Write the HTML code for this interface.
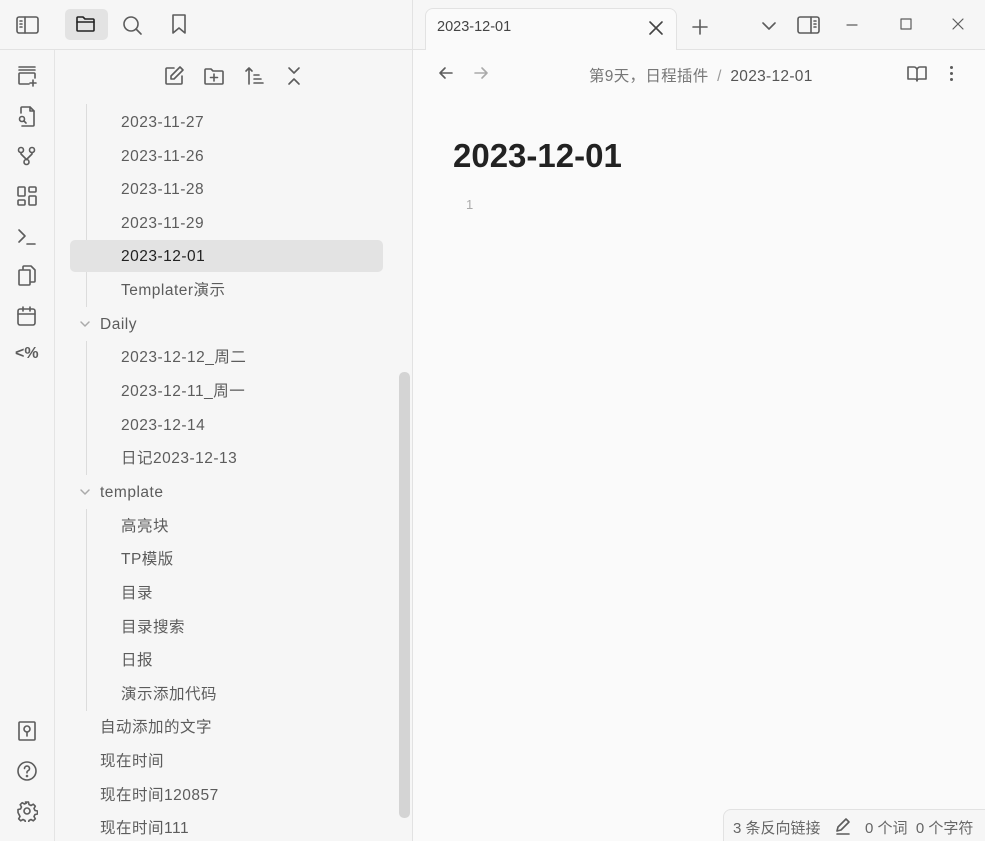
<!DOCTYPE html>
<html><head><meta charset="utf-8"><style>
*{margin:0;padding:0;box-sizing:border-box}
html,body{width:985px;height:841px;overflow:hidden}
body{background:#fafafa;font-family:"Liberation Sans","Noto Sans CJK SC",sans-serif;position:relative;color:#5c5c5c}
.abs{position:absolute}
svg{position:absolute;fill:none;stroke:#5c5c5c;stroke-width:1.6;stroke-linecap:round;stroke-linejoin:round}
.row{position:absolute;font-size:15.5px;letter-spacing:0.5px;line-height:20px;color:#5c5c5c;white-space:nowrap}
.guide{position:absolute;left:86px;width:1px;background:#dcdcdc}
</style></head><body>
<div class="abs" style="left:0;top:0;width:413px;height:841px;background:#f6f6f6"></div>
<div class="abs" style="left:413px;top:0;width:572px;height:49px;background:#f6f6f6"></div>
<div class="abs" style="left:0;top:49px;width:985px;height:1px;background:#e2e2e2"></div>
<div class="abs" style="left:54px;top:50px;width:1px;height:791px;background:#e4e4e4"></div>
<div class="abs" style="left:412px;top:0;width:1px;height:841px;background:#e2e2e2"></div>

<svg style="left:16px;top:15px" width="24" height="20" viewBox="0 0 24 20"><rect x="1" y="2" width="21" height="16" rx="2"/><line x1="9" y1="2" x2="9" y2="18"/><line x1="4" y1="6" x2="6" y2="6"/><line x1="4" y1="9" x2="6" y2="9"/><line x1="4" y1="12" x2="6" y2="12"/></svg>
<div class="abs" style="left:65px;top:9px;width:43px;height:31px;background:#e3e3e3;border-radius:5px"></div>
<svg style="left:75px;top:14px;stroke:#222" width="22" height="20" viewBox="0 0 22 20"><path d="M2 4a1 1 0 0 1 1-1h5l2 2h8a1 1 0 0 1 1 1v10a1 1 0 0 1-1 1H3a1 1 0 0 1-1-1z"/><line x1="2" y1="8" x2="19" y2="8"/></svg>
<svg style="left:121px;top:14px" width="22" height="22" viewBox="0 0 22 22"><circle cx="10" cy="10" r="7"/><line x1="15" y1="15" x2="20" y2="20"/></svg>
<svg style="left:170px;top:13px" width="18" height="22" viewBox="0 0 18 22"><path d="M3 2h12v18l-6-5-6 5z"/></svg>

<svg style="left:16px;top:65px" width="22" height="22" viewBox="0 0 22 22"><line x1="3" y1="2" x2="19" y2="2"/><line x1="3" y1="5" x2="19" y2="5"/><path d="M13 19H4a1 1 0 0 1-1-1V9a1 1 0 0 1 1-1h14a1 1 0 0 1 1 1v4"/><line x1="17" y1="15" x2="17" y2="21"/><line x1="14" y1="18" x2="20" y2="18"/></svg>
<svg style="left:16px;top:105px" width="22" height="22" viewBox="0 0 22 22"><path d="M5 8V3a1 1 0 0 1 1-1h8l4 4v14a1 1 0 0 1-1 1H6"/><path d="M14 2v4h4"/><circle cx="6" cy="14" r="2.5"/><line x1="8" y1="16" x2="10" y2="18"/></svg>
<svg style="left:16px;top:145px" width="22" height="22" viewBox="0 0 22 22"><circle cx="5" cy="5" r="2.5"/><circle cx="16" cy="5" r="2.5"/><circle cx="10.5" cy="17" r="2.5"/><path d="M5 7.5v1.5l5.5 5.5M16 7.5v1.5l-5.5 5.5"/></svg>
<svg style="left:16px;top:185px" width="22" height="22" viewBox="0 0 22 22"><rect x="2" y="2" width="7" height="9" rx="1"/><rect x="13" y="2" width="7" height="5" rx="1"/><rect x="13" y="11" width="7" height="9" rx="1"/><rect x="2" y="15" width="7" height="5" rx="1"/></svg>
<svg style="left:16px;top:225px" width="22" height="22" viewBox="0 0 22 22"><path d="M3 5l6 6-6 6"/><line x1="11" y1="19" x2="19" y2="19"/></svg>
<svg style="left:16px;top:264px" width="22" height="22" viewBox="0 0 22 22"><path d="M7 5V3a1 1 0 0 1 1-1h7l4 4v11a1 1 0 0 1-1 1h-3"/><path d="M3 7a1 1 0 0 1 1-1h10v14a1 1 0 0 1-1 1H4a1 1 0 0 1-1-1z"/></svg>
<svg style="left:16px;top:305px" width="22" height="22" viewBox="0 0 22 22"><rect x="2" y="4" width="17" height="16" rx="2"/><line x1="2" y1="9" x2="19" y2="9"/><line x1="7" y1="2" x2="7" y2="6"/><line x1="14" y1="2" x2="14" y2="6"/></svg>
<div class="abs" style="left:15px;top:345px;font-size:16px;font-weight:bold;color:#5c5c5c">&lt;%</div>
<svg style="left:16px;top:720px" width="22" height="22" viewBox="0 0 22 22"><rect x="3" y="2" width="16" height="18" rx="1"/><circle cx="11" cy="9" r="3"/><line x1="11" y1="12" x2="11" y2="16"/></svg>
<svg style="left:16px;top:760px" width="22" height="22" viewBox="0 0 22 22"><circle cx="11" cy="11" r="9"/><path d="M8.5 8.5a2.5 2.5 0 1 1 3.5 2.3c-.7.3-1 .8-1 1.5v.5"/><circle cx="11" cy="16" r=".5"/></svg>
<svg style="left:16px;top:800px" width="22" height="22" viewBox="0 0 22 22"><circle cx="11" cy="11" r="3"/><path d="M9.5 2h3l.5 2.5 2 1 2.3-1.3 2 2-1.3 2.3 1 2 2.5.5v3l-2.5.5-1 2 1.3 2.3-2 2-2.3-1.3-2 1-.5 2.5h-3l-.5-2.5-2-1-2.3 1.3-2-2 1.3-2.3-1-2L2 12.5v-3l2.5-.5 1-2-1.3-2.3 2-2 2.3 1.3 2-1z"/></svg>

<svg style="left:163px;top:65px" width="22" height="22" viewBox="0 0 22 22"><path d="M11 3H4a1 1 0 0 0-1 1v14a1 1 0 0 0 1 1h14a1 1 0 0 0 1-1v-7"/><path d="M17 2l3 3-9 9H8v-3z"/></svg>
<svg style="left:203px;top:65px" width="22" height="22" viewBox="0 0 22 22"><path d="M2 5a1 1 0 0 1 1-1h5l2 2h9a1 1 0 0 1 1 1v11a1 1 0 0 1-1 1H3a1 1 0 0 1-1-1z"/><line x1="11" y1="9" x2="11" y2="16"/><line x1="7.5" y1="12.5" x2="14.5" y2="12.5"/></svg>
<svg style="left:243px;top:65px" width="22" height="22" viewBox="0 0 22 22"><path d="M3 6l3-3 3 3M6 3v16"/><line x1="11" y1="10" x2="16" y2="10"/><line x1="11" y1="14" x2="18" y2="14"/><line x1="11" y1="18" x2="20" y2="18"/></svg>
<svg style="left:283px;top:65px" width="22" height="22" viewBox="0 0 22 22"><path d="M6 3l5 5 5-5M6 19l5-5 5 5"/></svg>

<div class="guide" style="top:104px;height:203px"></div>
<div class="guide" style="top:341px;height:134px"></div>
<div class="guide" style="top:509px;height:202px"></div>
<div class="abs" style="left:70px;top:240px;width:313px;height:32px;background:#e3e3e3;border-radius:5px"></div>
<div class="row" style="left:121px;top:113px">2023-11-27</div>
<div class="row" style="left:121px;top:147px">2023-11-26</div>
<div class="row" style="left:121px;top:180px">2023-11-28</div>
<div class="row" style="left:121px;top:214px">2023-11-29</div>
<div class="row" style="left:121px;top:247px;color:#222">2023-12-01</div>
<div class="row" style="left:121px;top:281px">Templater演示</div>
<svg style="left:79px;top:319px;stroke:#aaa;stroke-width:1.5" width="12" height="10" viewBox="0 0 12 10"><path d="M2 3l4 4 4-4"/></svg>
<div class="row" style="left:100px;top:315px">Daily</div>
<div class="row" style="left:121px;top:348px">2023-12-12_周二</div>
<div class="row" style="left:121px;top:382px">2023-12-11_周一</div>
<div class="row" style="left:121px;top:416px">2023-12-14</div>
<div class="row" style="left:121px;top:449px">日记2023-12-13</div>
<svg style="left:79px;top:487px;stroke:#aaa;stroke-width:1.5" width="12" height="10" viewBox="0 0 12 10"><path d="M2 3l4 4 4-4"/></svg>
<div class="row" style="left:100px;top:483px">template</div>
<div class="row" style="left:121px;top:517px">高亮块</div>
<div class="row" style="left:121px;top:550px">TP模版</div>
<div class="row" style="left:121px;top:584px">目录</div>
<div class="row" style="left:121px;top:618px">目录搜索</div>
<div class="row" style="left:121px;top:651px">日报</div>
<div class="row" style="left:121px;top:685px">演示添加代码</div>
<div class="row" style="left:100px;top:718px">自动添加的文字</div>
<div class="row" style="left:100px;top:752px">现在时间</div>
<div class="row" style="left:100px;top:786px">现在时间120857</div>
<div class="row" style="left:100px;top:819px">现在时间111</div>
<div class="abs" style="left:399px;top:372px;width:11px;height:446px;background:#d4d4d4;border-radius:5px"></div>

<div class="abs" style="left:425px;top:8px;width:252px;height:42px;background:#fafafa;border:1px solid #e2e2e2;border-bottom:none;border-radius:8px 8px 0 0"></div>
<div class="abs" style="left:437px;top:19px;font-size:14.5px;color:#444">2023-12-01</div>
<svg style="left:648px;top:20px;stroke:#444" width="16" height="16" viewBox="0 0 16 16"><path d="M2 2l12 12M14 2L2 14"/></svg>
<svg style="left:690px;top:17px" width="20" height="20" viewBox="0 0 20 20"><path d="M10 3v14M3 10h14"/></svg>
<svg style="left:760px;top:18px" width="18" height="16" viewBox="0 0 18 16"><path d="M3 5l6 6 6-6"/></svg>
<svg style="left:797px;top:15px" width="24" height="20" viewBox="0 0 24 20"><rect x="1" y="2" width="21" height="16" rx="2"/><line x1="14" y1="2" x2="14" y2="18"/><line x1="17" y1="6" x2="19" y2="6"/><line x1="17" y1="9" x2="19" y2="9"/><line x1="17" y1="12" x2="19" y2="12"/></svg>
<svg style="left:845px;top:18px;stroke-width:1.2" width="14" height="14" viewBox="0 0 14 14"><path d="M2 7h10"/></svg>
<svg style="left:899px;top:17px;stroke-width:1.2" width="14" height="14" viewBox="0 0 14 14"><rect x="2" y="2" width="10" height="10"/></svg>
<svg style="left:951px;top:17px;stroke-width:1.2" width="14" height="14" viewBox="0 0 14 14"><path d="M2 2l10 10M12 2L2 12"/></svg>

<svg style="left:437px;top:64px" width="18" height="18" viewBox="0 0 18 18"><path d="M15 9H3M8 4L3 9l5 5"/></svg>
<svg style="left:472px;top:64px;stroke:#aaa" width="18" height="18" viewBox="0 0 18 18"><path d="M3 9h12M10 4l5 5-5 5"/></svg>
<div class="abs" style="left:589px;top:64px;font-size:15.5px;letter-spacing:0.3px;color:#777;white-space:nowrap">第9天，日程插件 <span style="margin:0 4px;color:#999">/</span> <span style="color:#555">2023-12-01</span></div>
<svg style="left:906px;top:63px" width="22" height="20" viewBox="0 0 22 20"><path d="M2 4h6a3 3 0 0 1 3 3v11a2 2 0 0 0-2-2H2zM20 4h-6a3 3 0 0 0-3 3v11a2 2 0 0 1 2-2h7z"/></svg>
<div class="abs" style="left:950px;top:66px;width:3px;height:3px;background:#5c5c5c;border-radius:50%;box-shadow:0 6px 0 #5c5c5c,0 12px 0 #5c5c5c"></div>

<div class="abs" style="left:453px;top:137px;font-size:33px;font-weight:bold;color:#222">2023-12-01</div>
<div class="abs" style="left:466px;top:197px;font-size:13px;color:#aaa">1</div>

<div class="abs" style="left:723px;top:809px;width:262px;height:32px;border:1px solid #e2e2e2;border-right:none;border-bottom:none;border-radius:8px 0 0 0;background:#f6f6f6"></div>
<div class="abs" style="left:733px;top:817px;font-size:15px;color:#666;white-space:nowrap">3 条反向链接</div>
<svg style="left:834px;top:817px" width="18" height="18" viewBox="0 0 18 18"><path d="M3 14l1-4 8-8 3 3-8 8zM3 17h12"/></svg>
<div class="abs" style="left:865px;top:817px;font-size:15px;color:#666;white-space:nowrap">0 个词&nbsp; 0 个字符</div>
</body></html>
